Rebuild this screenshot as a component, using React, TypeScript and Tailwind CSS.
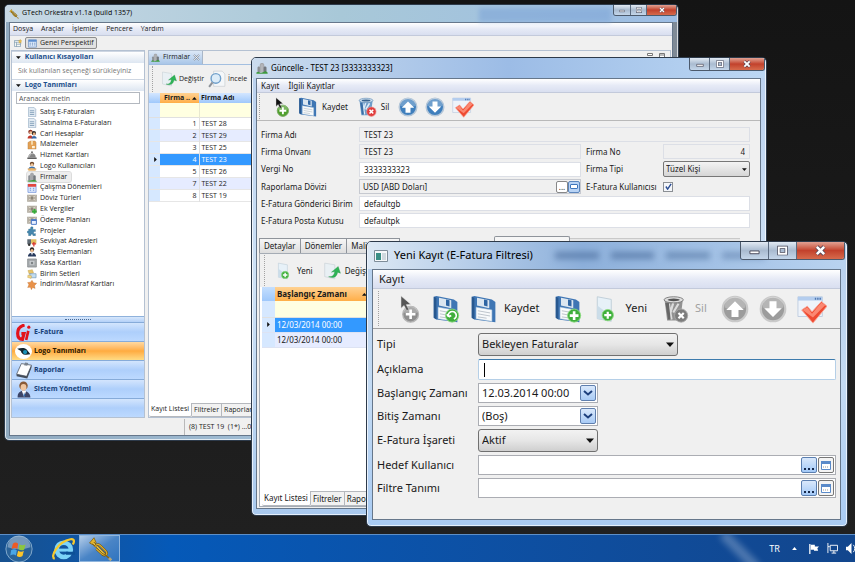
import React from "react";
import clsx from "clsx";

type Size = "sm" | "md" | "lg";

/* ---------- toolbar icons ---------- */

const Badge = ({ kind, gray }: { kind: "plus" | "cross" | "refresh"; gray?: boolean }) => {
  const fill = gray ? "#7d7d7d" : kind === "cross" ? "#e03c3c" : "#3fae3c";
  return (
    <g>
      <circle cx="23" cy="23.500" r="7.500" fill={fill} stroke={gray ? "#a9a9a9" : kind === "cross" ? "#f19a96" : "#8fdc82"} />
      {kind === "plus" && <path d="M23 18.500v10M18 23.500h10" stroke="#fff" strokeWidth="3" />}
      {kind === "cross" && <path d="M20 20.500l6 6M26 20.500l-6 6" stroke="#fff" strokeWidth="2.500" />}
      {kind === "refresh" && (
        <path d="M19 25a4.500 4.500 0 1 1 6 2.500M19 25l-2-3M19 25l3-1.500" fill="none" stroke="#fff" strokeWidth="2" />
      )}
    </g>
  );
};

const Icon = ({ className, children }: { className: string; children: React.ReactNode }) => (
  <svg viewBox="0 0 32 32" className={clsx("shrink-0", className)} aria-hidden="true">
    {children}
  </svg>
);

const CursorAdd = ({ className, gray }: { className: string; gray?: boolean }) => (
  <Icon className={className}>
    <circle cx="19" cy="22" r="9" fill={gray ? "#8e8e8e" : "#4f9f2c"} stroke={gray ? "#b5b5b5" : "#77a761"} strokeWidth="1.500" />
    <path d="M11 20a8 7 0 0 1 16 0c-5 2-11 2-16 0z" fill="#fff" opacity=".25" />
    <path d="M19 16.500v11M13.500 22h11" stroke="#fff" strokeWidth="3" />
    <path d="M8 1v14l3.500-3 3 6 2.500-1.500-3-5.500 5-.5z" fill={gray ? "#555" : "#111"} stroke="#ddd" strokeWidth=".6" />
  </Icon>
);

const Floppy = ({ className, badge }: { className: string; badge?: "plus" | "refresh" }) => (
  <Icon className={className}>
    <path d="M2 2l3-1 20 4 4 3v23l-24-3-3-2z" fill="#3f76b4" />
    <path d="M2 2l3 1v25l-3-2z" fill="#28588f" />
    <path d="M8 3l14 3v9L8 12z" fill="#dbe6f0" />
    <path d="M16 5l4 1v7l-4-1z" fill="#2e65a3" />
    <path d="M7 14l18 3v13L7 27z" fill="#f8fafb" stroke="#b9cfe2" strokeWidth=".6" />
    <path d="M9 18l14 2.500M9 21.500l14 2.500M9 25l10 1.500" stroke="#b6bec6" strokeWidth="1" />
    {badge && <Badge kind={badge} />}
  </Icon>
);

const Trash = ({ className, gray }: { className: string; gray?: boolean }) => (
  <Icon className={className}>
    <path d="M4 5h21l-3 24H7z" fill={gray ? "#929292" : "#6d9cc9"} />
    <path d="M9 10l3 18M14 9l-4 14M20 10l-6 10" stroke={gray ? "#dcdcdc" : "#dceaf6"} strokeWidth="2.500" />
    <path d="M5 9l3 19h3L9 9z" fill={gray ? "#666" : "#3a6fa8"} />
    <ellipse cx="14.500" cy="5.500" rx="11" ry="3.500" fill={gray ? "#dedede" : "#cfe1f1"} stroke={gray ? "#777" : "#5c88b4"} />
    <ellipse cx="14.500" cy="5.500" rx="7" ry="1.500" fill={gray ? "#555" : "#39648f"} />
    <Badge kind="cross" gray={gray} />
  </Icon>
);

const ArrowBall = ({ className, down, gray }: { className: string; down?: boolean; gray?: boolean }) => (
  <Icon className={className}>
    <circle cx="16" cy="16" r="14" fill={gray ? "#9c9c9c" : "#3f7fbd"} stroke={gray ? "#c9c9c9" : "#b4c6d8"} strokeWidth="2.500" />
    <path d="M4 14a12 12 0 0 1 24 0c-7 4-17 4-24 0z" fill="#fff" opacity=".25" />
    <path d={down ? "M12 7h8v8h6l-10 10L6 15h6z" : "M12 25h8v-8h6L16 7 6 17h6z"} fill="#fff" />
  </Icon>
);

const CheckWindow = ({ className }: { className: string }) => (
  <Icon className={className}>
    <path d="M1 3h26v21H1z" fill="#eef3fa" stroke="#c0cde0" />
    <path d="M1 3h26v4H1z" fill="#b4cdee" />
    <path d="M19 5h7" stroke="#4f78b0" strokeWidth="2" strokeDasharray="1.500 1" />
    <path d="M5 17l6-4 5 6L26 8l6 5-15 18z" fill="#ee4a31" stroke="#f7a596" />
    <path d="M6 17l5-3 5 7L26 9l4 3-13 13z" fill="#fb8872" />
  </Icon>
);

const PageAdd = ({ className }: { className: string }) => (
  <Icon className={className}>
    <path d="M6 2l16 3v25L6 27z" fill="#e7f1f8" stroke="#bccbd6" />
    <path d="M6 12l16 12v5L6 27z" fill="#cbdde9" />
    <circle cx="18" cy="23" r="6.500" fill="#3fae3c" stroke="#8fdc82" />
    <path d="M18 19v8M14 23h8" stroke="#fff" strokeWidth="2.500" />
  </Icon>
);

const PageEdit = ({ className }: { className: string }) => (
  <Icon className={className}>
    <path d="M3 2l18 3v25L3 26z" fill="#e9f0f4" stroke="#c2ccd2" />
    <path d="M10 26c8 1 10-4 11-9l-6 1 12-10 4 12-5-2c-1 7-6 12-16 8z" fill="#2eb456" stroke="#1d8c3f" strokeWidth=".6" />
  </Icon>
);

const PageSearch = ({ className }: { className: string }) => (
  <Icon className={className}>
    <path d="M10 2h15l5 5v22H10z" fill="#f4f7f9" stroke="#c0c6ca" />
    <circle cx="14" cy="15" r="8.500" fill="#dcecf8" stroke="#6f9fca" strokeWidth="2.500" />
    <path d="M8 22l-6 8" stroke="#8d9299" strokeWidth="3.500" />
  </Icon>
);

const Towers = ({ className }: { className: string }) => (
  <Icon className={className}>
    <path d="M4 28V15c0-4 7-4 7 0v13z" fill="#8b8f94" />
    <path d="M10 28V8c0-7 12-7 12 0v20z" fill="#a5a7ab" />
    <path d="M20 28V15c0-4 8-4 8 0v13z" fill="#74797f" />
    <path d="M14 6v22M18 6v22" stroke="#c6c9ce" strokeWidth="1.500" />
    <path d="M1 28l5-2 7 3 9-3 3-2 6 4v3H1z" fill="#3e9a3c" />
  </Icon>
);

const Trumpet = ({ className }: { className: string }) => (
  <Icon className={className}>
    <path d="M2 8l6-7 3 7-3 3z" fill="#e4b52b" stroke="#7f5c0c" />
    <path d="M7 8l16 16" stroke="#6e4f0b" strokeWidth="3.500" />
    <path d="M7 8l16 16" stroke="#ecc94b" strokeWidth="1.800" />
    <path d="M9 13c3-5 6-3 8-1l7 7c3 4-1 7-5 4l-8-7" fill="none" stroke="#6e4f0b" strokeWidth="3" />
    <path d="M9 13c3-5 6-3 8-1l7 7c3 4-1 7-5 4l-8-7" fill="none" stroke="#dcae2c" strokeWidth="1.600" />
    <path d="M22 23l7 6" stroke="#8a6510" strokeWidth="2" />
    <path d="M28 28l3 3" stroke="#b7a777" strokeWidth="3.500" />
  </Icon>
);

const PerspectiveIcon = ({ className }: { className: string }) => (
  <Icon className={className}>
    <path d="M2 3h28v26H2z" fill="#dbe8f8" stroke="#4c7ab5" strokeWidth="2" />
    <path d="M2 3h28v7H2z" fill="#5b8ed0" />
    <path d="M6 15h4M14 15h4M22 15h4M6 21h4M14 21h4M22 21h4" stroke="#5d86bb" strokeWidth="3" />
  </Icon>
);

const NewPerspectiveIcon = ({ className }: { className: string }) => (
  <Icon className={className}>
    <path d="M2 6h24v24H2z" fill="#f4f6f2" stroke="#567b98" strokeWidth="2" />
    <path d="M2 13h24M10 13v17M10 21h16" stroke="#567b98" strokeWidth="2" />
    <path d="M25 1l2 5 5 1-4 4 1 6-4-3-5 3 1-6-4-4 6-1z" fill="#f1c653" stroke="#b98e24" />
  </Icon>
);

/* ---------- navigation tree ---------- */

const doc = (
  <>
    <path d="M5 1h17l6 6v24H5z" fill="#e3ecf4" stroke="#8fa9c0" strokeWidth="2" />
    <path d="M9 12h14M9 18h14M9 24h14" stroke="#86a2bb" strokeWidth="3" />
  </>
);
const cash = (
  <>
    <path d="M1 6h30v21H1z" fill="#b6afa3" stroke="#8d867a" />
    <path d="M5 9l22 14M27 9L5 23" stroke="#e6e1d6" strokeWidth="2.500" />
    <circle cx="16" cy="16" r="5" fill="#8c8577" />
  </>
);

const treeItems: { label: string; art: React.ReactNode; active?: boolean }[] = [
  { label: "Satış E-Faturaları", art: doc },
  { label: "Satınalma E-Faturaları", art: doc },
  {
    label: "Cari Hesaplar",
    art: (
      <>
        <circle cx="11" cy="9" r="7" fill="#8e3225" />
        <circle cx="22" cy="13" r="7" fill="#2c2624" />
        <circle cx="12" cy="12" r="4.500" fill="#f0c39a" />
        <circle cx="23" cy="16" r="4.500" fill="#e6ae82" />
        <path d="M2 29c0-10 14-12 16-2v3H2z" fill="#c23a2c" />
        <path d="M14 30c1-10 16-10 17 0z" fill="#3768a8" />
      </>
    ),
  },
  {
    label: "Malzemeler",
    art: (
      <>
        <path d="M3 8l8-5h15l3 5v21H3z" fill="#e3a155" stroke="#a66c2a" />
        <path d="M13 3h6v12h-6z" fill="#f6dcae" />
        <path d="M16 19h9v7h-9z" fill="#fff1d8" />
      </>
    ),
  },
  {
    label: "Hizmet Kartları",
    art: (
      <>
        <path d="M4 24c0-18 24-18 24 0z" fill="#868686" />
        <path d="M8 21c1-9 7-11 10-9" stroke="#dadada" strokeWidth="2.500" fill="none" />
        <path d="M1 24h30v5H1z" fill="#5f5f5f" />
        <circle cx="16" cy="7" r="3" fill="#666" />
      </>
    ),
  },
  {
    label: "Logo Kullanıcıları",
    art: (
      <>
        <circle cx="16" cy="9" r="7" fill="#6e4628" />
        <circle cx="16" cy="12" r="5" fill="#f1c79c" />
        <path d="M5 24c2-9 20-9 22 0v3H5z" fill="#3f73ae" />
        <path d="M1 25l14-3 16 3-4 6H5z" fill="#e8b36a" />
      </>
    ),
  },
  {
    label: "Firmalar",
    active: true,
    art: (
      <>
        <path d="M4 28V14c0-5 8-5 8 0v14z" fill="#8b8f94" />
        <path d="M10 28V8c0-7 12-7 12 0v20z" fill="#a5a7ab" />
        <path d="M20 28V14c0-5 8-5 8 0v14z" fill="#74797f" />
        <path d="M1 28l10-1 12-2 8 4v2H1z" fill="#3e9a3c" />
      </>
    ),
  },
  {
    label: "Çalışma Dönemleri",
    art: (
      <>
        <path d="M3 4h26v26H3z" fill="#dce8fb" stroke="#5a7fd0" strokeWidth="2" />
        <path d="M3 3h26v9H3z" fill="#e2473f" />
        <path d="M9 17h4M19 17h4M9 23h4M19 23h4" stroke="#6d8fd6" strokeWidth="3" />
      </>
    ),
  },
  { label: "Döviz Türleri", art: cash },
  {
    label: "Ek Vergiler",
    art: (
      <>
        {cash}
        <path d="M24 16v15M16 24h15" stroke="#35ad3a" strokeWidth="6" />
      </>
    ),
  },
  {
    label: "Ödeme Planları",
    art: (
      <>
        {cash}
        <path d="M14 15h16v15H14z" fill="#e9f1ff" stroke="#4676c8" strokeWidth="3" />
        <path d="M14 17h16" stroke="#4676c8" strokeWidth="5" />
      </>
    ),
  },
  {
    label: "Projeler",
    art: (
      <path
        d="M12 9c-4-8 10-9 7-1l-1 3h9v7c-8-2-8 9 0 6v7h-8c1-6-8-6-7 0H5v-8c-6 1-6-9 0-7v-6z"
        fill="#4687ad"
        stroke="#2e6688"
      />
    ),
  },
  {
    label: "Sevkiyat Adresleri",
    art: (
      <>
        <path d="M1 7h12v16H1z" fill="#5f6a74" />
        <path d="M13 7h17v14H13z" fill="#e0bd5f" />
        <circle cx="7" cy="25" r="4" fill="#333" />
        <path d="M22 16v14M16 22h13" stroke="#d8352c" strokeWidth="4" />
      </>
    ),
  },
  {
    label: "Satış Elemanları",
    art: (
      <>
        <circle cx="16" cy="8" r="7" fill="#2a2320" />
        <circle cx="16" cy="11" r="5" fill="#efbf92" />
        <path d="M3 30c0-16 26-16 26 0z" fill="#27395c" />
        <path d="M13 18l3 9 3-9z" fill="#fff" />
      </>
    ),
  },
  {
    label: "Kasa Kartları",
    art: (
      <>
        <path d="M2 3h28v26H2z" fill="#a9adb0" stroke="#777b7f" strokeWidth="2" />
        <path d="M7 8h18v15H7z" fill="#c8cccf" stroke="#84888b" />
        <circle cx="16" cy="16" r="4" fill="#7e8386" />
      </>
    ),
  },
  {
    label: "Birim Setleri",
    art: (
      <>
        <path d="M3 5l14-3 4 10-14 4z" fill="#e9c56a" stroke="#a9832e" />
        <path d="M9 15h20v13H9z" fill="#c3ddf0" stroke="#6d93b4" strokeWidth="2" />
        <path d="M3 19l12 3-2 8-11-3z" fill="#f1d584" stroke="#b48f35" />
      </>
    ),
  },
  {
    label: "İndirim/Masraf Kartları",
    art: (
      <path d="M16 1l5 8 10 1-7 8 2 9-8-3-4 7-3-8-9 1 4-9-4-7 9-1z" fill="#e8924a" stroke="#bd6625" />
    ),
  },
];

const modules: { label: string; art: React.ReactNode; active?: boolean }[] = [
  {
    label: "E-Fatura",
    art: (
      <>
        <path d="M18 2C9 4 5 11 5 18s2 11 9 11l3-11h-5" fill="none" stroke="#e3131b" strokeWidth="6" />
        <path d="M25 13l-4 17" stroke="#e3131b" strokeWidth="5" />
        <circle cx="26" cy="6" r="3" fill="#e3131b" />
      </>
    ),
  },
  {
    label: "Logo Tanımları",
    active: true,
    art: (
      <>
        <ellipse cx="16" cy="16" rx="16" ry="14" fill="#fff" />
        <path d="M4 11c7-2 13-3 18 1l7 9-8 1c-6 1-9-3-10-7z" fill="#15262e" />
        <circle cx="19" cy="17" r="4" fill="#1b91b8" />
      </>
    ),
  },
  {
    label: "Raporlar",
    art: (
      <>
        <path d="M12 3l19 3-9 21-19-4z" fill="#fdfdfd" stroke="#555c66" strokeWidth="1.500" />
        <path d="M3 23l19 4 9-21v5l-8 20L3 27z" fill="#454d59" />
        <path d="M19 1l6 1-2 5-6-1z" fill="#79828d" />
      </>
    ),
  },
  {
    label: "Sistem Yönetimi",
    art: (
      <>
        <path d="M5 31c-2-17 23-17 24 0z" fill="#3c4568" />
        <path d="M13 19l4 11 4-11z" fill="#fff" />
        <path d="M17 21l-1 6 2 3 1-3z" fill="#2f6bb0" />
        <circle cx="16" cy="9" r="8" fill="#8a5a36" />
        <ellipse cx="16" cy="12" rx="5.500" ry="6.500" fill="#f0c6a0" />
      </>
    ),
  },
];

/* ---------- window chrome ---------- */

const chrome = {
  sm: {
    frame: "pr-[5px] pl-1 pb-1 bg-linear-to-r from-[#8fa9bf] via-[#a5c3dc] to-[#7f8a96] font-['Open_Sans',sans-serif]",
    bar: "h-[17px] text-[7px] gap-[3px] pl-1 bg-linear-to-r from-[#c7d8e4] via-[#a8c8d8] via-50% to-[#9dbde4]",
    menu: "h-[13px] text-[7px] gap-2 px-[3px]",
    buttons: "h-[11px]",
    min: "w-[17px]",
    max: "w-4",
    close: "w-[29px]",
    glyph: "h-[6px]",
  },
  md: {
    frame: "pr-[5px] pl-1 pb-[6px] bg-linear-to-b from-[#b9d0ee] via-[#cfe3f7] to-[#a9c9ee]",
    bar: "h-5 text-[8px] gap-[3px] pl-1 bg-linear-to-r from-[#cbdcee] via-[#9cbce6] via-50% to-[#bcd7f3]",
    menu: "h-[14px] text-[8px] gap-[9px] px-1",
    buttons: "h-[13px]",
    min: "w-5",
    max: "w-5",
    close: "w-[34px]",
    glyph: "h-2",
  },
  lg: {
    frame: "pr-[6px] pl-[5px] pb-[6px] bg-linear-to-b from-[#b7d0ee] via-[#c4dbf3] to-[#a9cbf3]",
    bar: "h-[27px] text-[11px] gap-[6px] pl-[6px] bg-linear-to-r from-[#dce8f4] via-[#8db0db] via-45% to-[#b9d3f0]",
    menu: "h-[19px] text-[11px] gap-3 px-[6px]",
    buttons: "h-[18px]",
    min: "w-7",
    max: "w-7",
    close: "w-[47px]",
    glyph: "h-[11px]",
  },
};

type WindowProps = {
  size: Size;
  title: string;
  icon: React.ReactNode;
  menu: string[];
  className: string;
  behind?: React.ReactNode;
  children: React.ReactNode;
};

const AppWindow = ({ size, title, icon, menu, className, behind, children }: WindowProps) => {
  const c = chrome[size];
  const button = "flex items-center justify-center border-r border-[#5b6b80] bg-linear-to-b from-[#e2eaf3] via-[#a9bbd0] via-50% to-[#c4d6ea]";
  return (
    <section
      className={clsx(
        "absolute flex flex-col overflow-hidden rounded-[5px] border border-[#2d3a4a] shadow-[inset_0_0_0_1px_rgba(255,255,255,0.7)]",
        c.frame,
        className
      )}
    >
      <header className={clsx("relative -mx-1 flex shrink-0 items-center", c.bar)}>
        {behind}
        {icon}
        <h2 className="relative whitespace-nowrap text-black">{title}</h2>
        <div className={clsx("relative ml-auto flex self-start overflow-hidden rounded-b-[3px] border border-t-0 border-[#4c5a6c]", c.buttons)}>
          <button aria-label="Küçült" className={clsx(button, c.min)}>
            <svg viewBox="0 0 12 12" className={c.glyph}>
              <path d="M1 6.500h10v3H1z" fill="#fff" stroke="#445" />
            </svg>
          </button>
          <button aria-label="Büyüt" className={clsx(button, c.max)}>
            <svg viewBox="0 0 12 12" className={c.glyph}>
              <path d="M2 2.500h8v7H2z" fill="none" stroke="#445" strokeWidth="3.500" />
              <path d="M2 2.500h8v7H2z" fill="none" stroke="#fff" strokeWidth="2" />
            </svg>
          </button>
          <button
            aria-label="Kapat"
            className={clsx("flex items-center justify-center bg-linear-to-b from-[#e0a193] via-[#c2412c] via-50% to-[#d66a4c]", c.close)}
          >
            <svg viewBox="0 0 12 12" className={c.glyph}>
              <path d="M2 2l8 8M10 2l-8 8" stroke="#545" strokeWidth="4.500" />
              <path d="M2 2l8 8M10 2l-8 8" stroke="#fff" strokeWidth="2.800" />
            </svg>
          </button>
        </div>
      </header>
      <div className="flex min-h-0 flex-1 flex-col border border-[#66778b] bg-[#f0f0f0]">
        <nav
          className={clsx(
            "flex shrink-0 items-center border-b border-[#c3cadb] bg-linear-to-b from-white via-[#e6eaf6] via-50% to-[#d9dff0]",
            c.menu
          )}
        >
          {menu.map((m) => (
            <button key={m}>{m}</button>
          ))}
        </nav>
        {children}
      </div>
    </section>
  );
};

const Grip = ({ className }: { className: string }) => (
  <span className={clsx("shrink-0 self-stretch border-l border-dotted border-[#a2a2a2]", className)} />
);

const Caret = ({ className }: { className: string }) => (
  <svg viewBox="0 0 8 5" className={clsx("pointer-events-none shrink-0", className)} aria-hidden="true">
    <path d="M0 .5h8L4 5z" fill="#111" />
  </svg>
);

const BottomTabs = ({ className }: { className: string }) => (
  <div className={clsx("flex shrink-0 overflow-hidden whitespace-nowrap", className)}>
    {["Kayıt Listesi", "Filtreler", "Raporlar"].map((t, i) => (
      <button
        key={t}
        className={clsx("border-r border-b border-[#b5b8bd] px-[2px]", i === 0 ? "rounded-b-[2px] bg-white" : "border-t bg-[#f2f2f2]")}
      >
        {t}
      </button>
    ))}
  </div>
);

/* ---------- Orkestra main window ---------- */

const firms = [
  ["1", "TEST 28"],
  ["2", "TEST 29"],
  ["3", "TEST 25"],
  ["4", "TEST 23"],
  ["5", "TEST 26"],
  ["7", "TEST 22"],
  ["8", "TEST 19"],
];

const SideHeader = ({ children }: { children: React.ReactNode }) => (
  <h3 className="flex h-3 items-center gap-1 border-t border-[#cdd6e2] bg-linear-to-b from-white to-[#dde6f1] pl-1 font-bold text-[#1c4f8c]">
    <Caret className="h-[3px]" />
    {children}
  </h3>
);

const Sidebar = () => (
  <aside className="flex w-[134px] shrink-0 flex-col border border-[#b4c1d2] bg-white">
    <SideHeader>Kullanıcı Kısayolları</SideHeader>
    <p className="h-4 pl-[6px] leading-4 whitespace-nowrap text-[#777]">Sık kullanılan seçeneği sürükleyiniz</p>
    <SideHeader>Logo Tanımları</SideHeader>
    <input
      aria-label="Aranacak metin"
      placeholder="Aranacak metin"
      className="mx-1 mt-px h-3 border border-[#b3b8bf] bg-white px-[2px] placeholder:text-[#555]"
    />
    <ul className="mt-[3px] grid h-[183px] shrink-0 auto-rows-fr pl-[15px]">
      {treeItems.map((t) => (
        <li key={t.label} className="flex min-h-0">
          <a
            href="#"
            className={clsx(
              "flex items-center gap-[3px] pr-1 whitespace-nowrap",
              t.active && "rounded-[2px] bg-[#eeeeee] outline outline-[#dcdcdc]"
            )}
          >
            <Icon className="size-[10px]">{t.art}</Icon>
            {t.label}
          </a>
        </li>
      ))}
    </ul>
    <div className="mt-auto flex h-[6px] items-center justify-center border-t border-[#8fb2dc] bg-linear-to-b from-[#d7e7fb] to-[#b4d1f8]">
      <span className="w-[26px] border-t border-dotted border-[#4a6a94]" />
    </div>
    {modules.map((m) => (
      <button
        key={m.label}
        className={clsx(
          "flex h-[19px] shrink-0 items-center gap-[2px] border-t border-[#86abd9] pl-[3px] font-bold",
          m.active
            ? "bg-linear-to-b from-[#ffd9a0] via-[#ffab3f] via-50% to-[#ffdb83] text-[#2c1a00]"
            : "bg-linear-to-b from-[#d3e5fd] via-[#aecffb] via-50% to-[#bcd9ff] text-[#173f77]"
        )}
      >
        <Icon className="size-[17px]">{m.art}</Icon>
        {m.label}
      </button>
    ))}
    <div className="h-[19px] shrink-0 border-t border-[#86abd9] bg-linear-to-b from-[#d3e5fd] via-[#aecffb] via-50% to-[#bcd9ff]" />
  </aside>
);

const MainWindow = () => (
  <AppWindow
    size="sm"
    title="GTech Orkestra v1.1a (build 1357)"
    icon={<Trumpet className="size-[10px]" />}
    menu={["Dosya", "Araçlar", "İşlemler", "Pencere", "Yardım"]}
    className="top-1 right-[176px] bottom-[93px] left-1"
    behind={<span className="absolute top-[3px] right-[66px] h-[14px] w-[132px] bg-[#7fa6d8] opacity-60 blur-[2px]" />}
  >
    <div className="flex h-[14px] shrink-0 items-center gap-[3px] px-1 text-[7px]">
      <NewPerspectiveIcon className="size-2" />
      <button className="flex h-3 items-center gap-[3px] rounded-[2px] border border-[#8d8d8d] bg-[#e2e2e2] px-[2px]">
        <PerspectiveIcon className="size-[9px]" />
        Genel Perspektif
      </button>
    </div>
    <div className="flex min-h-0 flex-1 gap-[3px] px-px text-[7px]">
      <Sidebar />
      <main className="flex min-w-0 flex-1 flex-col border border-[#b4c1d2] bg-white">
        <div className="flex h-[14px] shrink-0 items-stretch border-b border-[#a3bfe0] bg-[#f0f0f0]">
          <button className="flex items-center gap-[3px] border-r border-[#a9b7c8] bg-linear-to-b from-[#dce8f6] to-[#a9c6e8] px-[2px]">
            <Towers className="size-[9px]" />
            Firmalar
            <svg viewBox="0 0 8 8" className="size-[7px]">
              <path d="M1 1l6 6M7 1L1 7" stroke="#8b95a2" strokeWidth="2" />
              <path d="M1 1l6 6M7 1L1 7" stroke="#fff" strokeWidth=".8" />
            </svg>
          </button>
          <svg viewBox="0 0 18 6" className="mt-[2px] mr-[5px] ml-auto h-[6px]">
            <path d="M.5.500h5v2h-5zM12.500.500h5v5h-5zM12.500 2h5" fill="#fff" stroke="#777" />
          </svg>
        </div>
        <div className="flex h-[28px] shrink-0 items-center bg-[#f0f0f0] py-px pl-[3px]">
          <Grip className="mr-2" />
          <button className="mr-1 flex items-center gap-[2px]">
            <PageEdit className="size-4" />
            Değiştir
          </button>
          <button className="flex items-center gap-[2px]">
            <PageSearch className="size-[18px]" />
            İncele
          </button>
        </div>
        <table className="w-full table-fixed border-collapse">
          <thead>
            <tr className="h-[10px] bg-linear-to-b from-[#d3e6ff] to-[#9fc8fb] text-left leading-[10px]">
              <th className="w-[11px]" />
              <th className="w-[39px] bg-linear-to-b from-[#ffd191] to-[#ffae45] pl-1">
                <span className="flex items-center justify-between pr-[2px]">
                  Firma ..
                  <Caret className="h-[3px] rotate-180" />
                </span>
              </th>
              <th className="pl-[2px]">Firma Adı</th>
            </tr>
            <tr className="h-[14px] border-b border-[#e0e0e0] bg-[#ffffe1]">
              <td className="bg-[#d6e8ff]" />
              <td className="border-r border-[#e8e8d0]" />
              <td />
            </tr>
          </thead>
          <tbody className="leading-[11px]">
            {firms.map(([no, name], i) => (
              <tr
                key={no}
                className={clsx(
                  "h-3 border-b border-[#e6e6e6]",
                  no === "4" ? "bg-[#3399ff] text-white" : i % 2 ? "bg-[#e6ecff]" : "bg-white"
                )}
              >
                <td className="bg-[#d6e8ff] pl-1">
                  {no === "4" && <Caret className="h-[3px] -rotate-90" />}
                </td>
                <td className="border-r border-[#e0e0e0] pr-[2px] text-right">{no}</td>
                <td className="pl-[2px]">{name}</td>
              </tr>
            ))}
          </tbody>
        </table>
        <BottomTabs className="mt-auto h-[14px]" />
      </main>
    </div>
    <footer className="flex h-[17px] shrink-0 items-center pl-[174px]">
      <span className="border-l border-[#b9b9b9] pl-1 text-[7px] leading-4 whitespace-pre">(8) TEST 19  (1*) ...01</span>
    </footer>
  </AppWindow>
);

/* ---------- firm update window ---------- */

const field = "h-[15px] w-full min-w-0 border border-[#dcdfe6] px-1";

const UpdateWindow = () => (
  <AppWindow
    size="md"
    title="Güncelle - TEST 23 [3333333323]"
    icon={<Towers className="size-3" />}
    menu={["Kayıt", "İlgili Kayıtlar"]}
    className="top-[57px] right-[88px] bottom-[18px] left-[251px]"
  >
    <div className="flex h-7 shrink-0 items-center gap-[7px] border-b border-[#b9b9b9] py-px pl-[2px] text-[8px]">
      <Grip className="mr-1" />
      <button aria-label="Seçerek ekle">
        <CursorAdd className="size-5" />
      </button>
      <button className="flex items-center gap-1 pr-[2px]">
        <Floppy className="size-5" />
        Kaydet
      </button>
      <button className="flex items-center gap-1 pr-[2px]">
        <Trash className="size-5" />
        Sil
      </button>
      <button aria-label="Önceki">
        <ArrowBall className="size-5" />
      </button>
      <button aria-label="Sonraki">
        <ArrowBall className="size-5" down />
      </button>
      <button aria-label="Onayla">
        <CheckWindow className="size-[22px]" />
      </button>
    </div>
    <form className="mt-[6px] mr-[10px] ml-1 grid shrink-0 grid-cols-[98px_minmax(0,1fr)_82px_87px] items-center gap-y-[2px] text-[8px]">
      <label htmlFor="firma-adi">Firma Adı</label>
      <div className="col-span-3">
        <input id="firma-adi" readOnly defaultValue="TEST 23" className={clsx(field, "bg-[#f0f0f0]")} />
      </div>
      <label htmlFor="firma-unvani">Firma Ünvanı</label>
      <input id="firma-unvani" readOnly defaultValue="TEST 23" className={clsx(field, "bg-[#f0f0f0]")} />
      <label htmlFor="firma-no" className="pl-[5px]">Firma No</label>
      <input id="firma-no" readOnly defaultValue="4" className={clsx(field, "bg-[#f0f0f0] text-right")} />
      <label htmlFor="vergi-no">Vergi No</label>
      <input id="vergi-no" defaultValue="3333333323" className={clsx(field, "bg-white")} />
      <label htmlFor="firma-tipi" className="pl-[5px]">Firma Tipi</label>
      <div className="relative flex items-center">
        <select
          id="firma-tipi"
          className="h-4 w-full appearance-none rounded-[2px] border border-[#777] bg-linear-to-b from-[#f3f3f3] to-[#d6d6d6] px-[2px]"
        >
          <option>Tüzel Kişi</option>
        </select>
        <Caret className="absolute right-[3px] h-[3px]" />
      </div>
      <label htmlFor="doviz">Raporlama Dövizi</label>
      <div className="flex h-[15px] items-center border border-[#c6c9d0] bg-[#f0f0f0]">
        <input id="doviz" readOnly defaultValue="USD [ABD Doları]" className="min-w-0 flex-1 px-[3px]" />
        <button type="button" aria-label="Seç" className="h-3 w-3 rounded-[2px] border border-[#888] bg-white leading-[6px]">
          ...
        </button>
        <button type="button" aria-label="Kart" className="flex h-3 w-3 items-center justify-center rounded-[2px] border border-[#5c86bd] bg-[#b8d3f5]">
          <span className="h-[5px] w-2 rounded-[1px] border border-[#3f76bd] bg-white" />
        </button>
      </div>
      <label htmlFor="kullanici" className="pl-[5px] whitespace-nowrap">E-Fatura Kullanıcısı</label>
      <span className="relative flex size-[10px] items-center justify-center">
        <input id="kullanici" type="checkbox" defaultChecked className="size-[10px] appearance-none border border-[#8b8f94] bg-[#f4f6fa]" />
        <svg viewBox="0 0 8 8" className="pointer-events-none absolute size-[7px]">
          <path d="M1 4l2 3 4-6" fill="none" stroke="#2c4f94" strokeWidth="1.600" />
        </svg>
      </span>
      <label htmlFor="birim" className="whitespace-nowrap">E-Fatura Gönderici Birim</label>
      <div className="col-span-3">
        <input id="birim" defaultValue="defaultgb" className={clsx(field, "bg-white")} />
      </div>
      <label htmlFor="kutu" className="whitespace-nowrap">E-Fatura Posta Kutusu</label>
      <div className="col-span-3">
        <input id="kutu" defaultValue="defaultpk" className={clsx(field, "bg-white")} />
      </div>
    </form>
    <div className="mt-2 ml-[2px] flex h-[17px] shrink-0 items-end text-[8px]">
      {["Detaylar", "Dönemler", "Mali Bilgiler"].map((t) => (
        <button
          key={t}
          className="h-[15px] border border-b-0 border-l-0 border-[#8f949b] bg-linear-to-b from-[#f6f6f6] to-[#dedede] px-1 whitespace-nowrap first:border-l"
        >
          {t}
        </button>
      ))}
      <span className="ml-auto h-[17px] w-[76px] rounded-t-[2px] border border-b-0 border-[#8f949b] bg-[#f6f6f6]" />
      <span className="mr-5 h-[15px] w-[170px] border-t border-[#c9c9c9] bg-[#e6e6e6]" />
    </div>
    <div className="mx-[2px] mb-px flex min-h-0 flex-1 flex-col border border-[#a5acb5] bg-white px-[2px] text-[8px]">
      <div className="-mx-[2px] flex h-[33px] shrink-0 items-center bg-[#f0f0f0] py-px pl-1">
        <Grip className="mr-[10px]" />
        <button className="mr-[10px] flex items-center gap-1">
          <PageAdd className="size-[18px]" />
          Yeni
        </button>
        <button className="flex items-center gap-1">
          <PageEdit className="size-[18px]" />
          Değiştir
        </button>
      </div>
      <table className="w-full table-fixed border-collapse">
        <thead>
          <tr className="h-[14px] bg-linear-to-b from-[#c5dffe] to-[#9fc8fb] text-left leading-[14px]">
            <th className="w-[13px]" />
            <th className="w-[98px] bg-linear-to-b from-[#ffd191] to-[#ffae45] pl-[2px]">
              <span className="flex items-center justify-between pr-[6px]">
                Başlangıç Zamanı
                <Caret className="h-[3px] rotate-180" />
              </span>
            </th>
            <th className="pl-1">Bitiş Zamanı</th>
          </tr>
          <tr className="h-4 border-b border-[#e0e0e0] bg-[#ffffe1]">
            <td className="bg-[#d6e8ff]" />
            <td />
            <td />
          </tr>
        </thead>
        <tbody className="leading-[14px]">
          {[true, false].map((selected) => (
            <tr
              key={String(selected)}
              className={clsx("h-[15px] border-b border-[#dde3f3]", selected ? "bg-[#3399ff] text-white" : "bg-[#e6ecff]")}
            >
              <td className="bg-[#d6e8ff] pl-1">{selected && <Caret className="h-[3px] -rotate-90" />}</td>
              <td className="pl-[2px]">12/03/2014 00:00</td>
              <td />
            </tr>
          ))}
        </tbody>
      </table>
      <BottomTabs className="mt-auto h-[15px]" />
    </div>
  </AppWindow>
);

/* ---------- new record window ---------- */

const SelectBox = ({ id, value, className }: { id: string; value: string; className: string }) => (
  <div className={clsx("relative flex items-center", className)}>
    <select
      id={id}
      className="h-[23px] w-full appearance-none rounded-[3px] border border-[#707070] bg-linear-to-b from-[#f2f2f2] via-[#e6e6e6] via-50% to-[#cfcfcf] px-[3px]"
    >
      <option>{value}</option>
    </select>
    <Caret className="absolute right-1 h-[5px]" />
  </div>
);

const DateBox = ({ id, value }: { id: string; value: string }) => (
  <div className="flex h-5 w-[120px] items-center border border-[#abadb3] bg-white pr-px">
    <input id={id} defaultValue={value} className="min-w-0 flex-1 pl-[3px]" />
    <button
      type="button"
      aria-label="Tarih seç"
      className="flex size-4 items-center justify-center rounded-[2px] border border-[#5f7fae] bg-linear-to-b from-[#d9e8fb] to-[#a9cbf5]"
    >
      <svg viewBox="0 0 10 6" className="h-[6px]">
        <path d="M1 1l4 3.500L9 1" fill="none" stroke="#1d3f7c" strokeWidth="2" />
      </svg>
    </button>
  </div>
);

const LookupBox = ({ id }: { id: string }) => (
  <div className="flex h-5 items-center gap-px border border-[#abadb3] bg-white pr-px">
    <input id={id} className="min-w-0 flex-1 px-1" />
    <button
      type="button"
      aria-label="Listeden seç"
      className="flex size-4 items-end justify-center rounded-[2px] border border-[#5b7fb0] bg-linear-to-b from-[#d9e8fb] to-[#a3c9f7] pb-[2px]"
    >
      <svg viewBox="0 0 10 2" className="h-[2px]">
        <path d="M0 0h2v2H0zM4 0h2v2H4zM8 0h2v2H8z" fill="#16294d" />
      </svg>
    </button>
    <button type="button" aria-label="Kartı aç" className="flex size-4 items-center justify-center rounded-[2px] border border-[#777] bg-[#f4f4f4]">
      <svg viewBox="0 0 10 9" className="h-[9px]">
        <path d="M.5.500h9v8h-9z" fill="#fff" stroke="#5a8ac9" />
        <path d="M0 0h10v3H0z" fill="#5a8ac9" />
        <path d="M2 6h6" stroke="#999" strokeDasharray="1 1" />
      </svg>
    </button>
  </div>
);

const NewRecordWindow = () => (
  <AppWindow
    size="lg"
    title="Yeni Kayıt (E-Fatura Filtresi)"
    icon={
      <svg viewBox="0 0 14 12" className="relative h-3">
        <path d="M.5.500h13v11H.5z" fill="#f5f8fa" stroke="#7d8c99" />
        <path d="M2 3h5v7H2z" fill="#3a8f86" />
        <path d="M8 3h4v7H8z" fill="#cfd9df" />
      </svg>
    }
    menu={["Kayıt"]}
    className="top-[241px] right-[7px] left-[366px]"
    behind={
      <div className="absolute inset-y-[10px] right-20 flex w-[210px] gap-3 blur-[3px]">
        <span className="flex-1 bg-[#4f719f] opacity-70" />
        <span className="flex-1 bg-[#4f719f] opacity-70" />
        <span className="flex-1 bg-[#4f719f] opacity-60" />
        <span className="flex-1 bg-[#4f719f] opacity-50" />
      </div>
    }
  >
    <div className="flex h-10 shrink-0 items-center gap-[10px] overflow-hidden border-b border-[#a0a0a0] py-[2px] pl-[5px] text-[11px]">
      <Grip className="mr-[5px]" />
      <button aria-label="Seçerek ekle">
        <CursorAdd className="size-7" gray />
      </button>
      <button aria-label="Kaydet ve yenile">
        <Floppy className="size-7" badge="refresh" />
      </button>
      <button className="flex items-center gap-[6px] pr-1">
        <Floppy className="size-7" />
        Kaydet
      </button>
      <button aria-label="Kaydet ve yeni">
        <Floppy className="size-7" badge="plus" />
      </button>
      <button className="flex items-center gap-[6px] pr-1">
        <PageAdd className="size-7" />
        Yeni
      </button>
      <button disabled className="flex items-center gap-[6px] pr-1 text-[#a0a0a0]">
        <Trash className="size-7" gray />
        Sil
      </button>
      <button aria-label="Önceki">
        <ArrowBall className="size-7" gray />
      </button>
      <button aria-label="Sonraki">
        <ArrowBall className="size-7" gray down />
      </button>
      <button aria-label="Onayla">
        <CheckWindow className="size-[30px]" />
      </button>
    </div>
    <form className="grid grid-cols-[101px_minmax(0,1fr)] items-center gap-y-[3px] px-1 pt-1 pb-[21px] text-[11px]">
      <label htmlFor="tipi">Tipi</label>
      <SelectBox id="tipi" value="Bekleyen Faturalar" className="w-[200px]" />
      <label htmlFor="aciklama">Açıklama</label>
      <div className="relative flex items-center">
        <input id="aciklama" className="h-[21px] w-full rounded-[2px] border border-[#b5cfe7] border-t-[#3d7bad] bg-white px-1" />
        <span className="absolute left-[6px] h-[14px] w-px bg-black" />
      </div>
      <label htmlFor="baslangic">Başlangıç Zamanı</label>
      <DateBox id="baslangic" value="12.03.2014 00:00" />
      <label htmlFor="bitis">Bitiş Zamanı</label>
      <DateBox id="bitis" value="(Boş)" />
      <label htmlFor="isaret">E-Fatura İşareti</label>
      <SelectBox id="isaret" value="Aktif" className="w-[120px]" />
      <label htmlFor="hedef">Hedef Kullanıcı</label>
      <LookupBox id="hedef" />
      <label htmlFor="filtre">Filtre Tanımı</label>
      <LookupBox id="filtre" />
    </form>
  </AppWindow>
);

/* ---------- taskbar ---------- */

const Taskbar = () => (
  <footer className="relative flex h-7 shrink-0 items-center overflow-hidden border-t border-[#5d8fc8] bg-linear-to-r from-[#17518f] via-[#0559b8] via-20% to-[#12468d] pl-[5px] text-white">
    <span className="absolute -top-2 right-[110px] h-12 w-[10px] -rotate-45 bg-white opacity-25 blur-[3px]" />
    <button aria-label="Başlat">
      <svg viewBox="0 0 32 32" className="size-7">
        <circle cx="16" cy="16" r="15" fill="#2a6298" stroke="#8fb4d4" />
        <path d="M3 14a13 13 0 0 1 26 0c-8 3-18 3-26 0z" fill="#fff" opacity=".35" />
        <path d="M9 10c2-2 4-2 6 0l-1 6c-2-1.500-4-1.500-6.500 0z" fill="#ee5a24" />
        <path d="M16.500 10.500c2 1.500 5 1.500 7 0l-1.500 6c-2 1.500-4 1-6.500 0z" fill="#8cc63e" />
        <path d="M7 17.500c2-1.500 4.500-1.500 6.500 0l-1 6c-2-1.500-4-1.500-6.500 0z" fill="#49a5e6" />
        <path d="M15 18c2 1.500 5 1.500 6.500 0l-1.500 6c-2 1.500-4.500 1.500-6.500 0z" fill="#fdc529" />
      </svg>
    </button>
    <button aria-label="Internet Explorer" className="ml-[18px]">
      <svg viewBox="0 0 32 32" className="size-6">
        <circle cx="17" cy="17" r="9.500" fill="none" stroke="#7cd3f8" strokeWidth="6" />
        <path d="M9 17.500h18" stroke="#7cd3f8" strokeWidth="4" />
        <path d="M20 21.500h11v-2" stroke="#0c5096" strokeWidth="4" fill="none" />
        <path d="M5 29C-2 27 9 6 26 3c6-1 5 4 3 7" fill="none" stroke="#f5c92e" strokeWidth="3" />
      </svg>
    </button>
    <button
      aria-label="GTech Orkestra"
      className="ml-1 flex h-full w-[41px] items-center justify-center border border-[#8fb5dd] bg-linear-to-br from-[#b4cde8] via-[#4a85c6] to-[#2f74bf]"
    >
      <Trumpet className="size-6" />
    </button>
    <div className="ml-auto flex items-center gap-3">
      <span className="text-[9px]">TR</span>
      <svg viewBox="0 0 8 5" className="w-[5px]">
        <path d="M4 0l4 5H0z" fill="#fff" />
      </svg>
      <svg viewBox="0 0 12 12" className="size-[10px]">
        <path d="M1 0v12" stroke="#fff" strokeWidth="1.500" />
        <path d="M2 1h5v2h5l-2 2 1 3H6V7H2z" fill="#fff" />
      </svg>
      <svg viewBox="0 0 12 12" className="-ml-1 size-[11px]">
        <path d="M3.500 2.500h8v6h-8zM5 11h5M7.500 8.500V11" fill="none" stroke="#fff" />
        <path d="M1 0v4h2M1 4v7" stroke="#fff" fill="none" />
      </svg>
      <svg viewBox="0 0 10 12" className="-ml-1 h-[11px]">
        <path d="M0 4h2l4-4v12L2 8H0z" fill="#fff" />
        <path d="M8 2c2 2 2 6 0 8" stroke="#fff" fill="none" />
      </svg>
    </div>
  </footer>
);

const App = () => (
  <div className="flex h-screen flex-col overflow-hidden bg-[#171717] font-['Noto_Sans','Open_Sans',sans-serif] text-[#1a1a1a]">
    <div className="relative min-h-0 flex-1 bg-linear-to-b from-[#141414] via-[#1a1a1a] to-[#202020]">
      <MainWindow />
      <UpdateWindow />
      <NewRecordWindow />
    </div>
    <Taskbar />
  </div>
);

export default App;
